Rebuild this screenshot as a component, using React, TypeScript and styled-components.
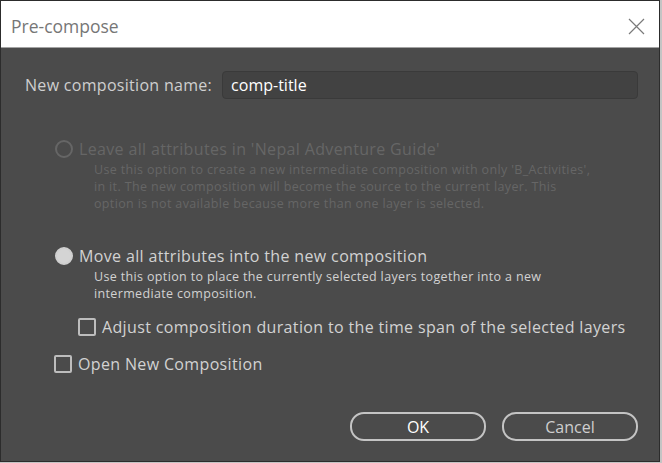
import React from "react";
import styled, { createGlobalStyle } from "styled-components";

const Global = createGlobalStyle`
  html, body { margin: 0; padding: 0; background: #c4c4c4; }
  body { font-family: "Open Sans", "Liberation Sans", sans-serif; }
  * { box-sizing: border-box; }
`;

const Window = styled.div`
  width: 660px;
  height: 462px;
  border: 1px solid #2c2c2c;
  display: flex;
  flex-direction: column;
  background: #4b4b4b;
`;

const TitleBar = styled.div`
  height: 47px;
  flex: none;
  background: #ffffff;
  border-bottom: 1px solid #a3a3a3;
  display: flex;
  align-items: center;
  justify-content: space-between;
  padding: 4px 14px 0 10px;
`;

const Title = styled.span`
  font-size: 17.5px;
  color: #767676;
`;

const CloseBtn = styled.div`
  width: 18px;
  height: 18px;
  display: flex;
  align-items: center;
  justify-content: center;
`;

const Body = styled.div`
  flex: 1;
  display: flex;
  flex-direction: column;
  padding: 23px 21px 0 24px;
`;

const NameRow = styled.div`
  display: flex;
  align-items: center;
  gap: 10px;
`;

const Label = styled.span`
  font-size: 16px;
  letter-spacing: 0.3px;
  color: #cfcfcf;
`;

const NameInput = styled.div`
  flex: 1;
  height: 28px;
  background: #424242;
  border: 1px solid #3a3a3a;
  border-radius: 4px;
  display: flex;
  align-items: center;
  padding-left: 8px;
  font-size: 16px;
  color: #ffffff;
`;

const Option = styled.div<{ $top: number; $indent: number }>`
  margin-top: ${(p) => p.$top}px;
  margin-left: ${(p) => p.$indent}px;
  display: flex;
  flex-direction: column;
`;

const OptionHead = styled.div<{ $disabled?: boolean }>`
  display: flex;
  align-items: center;
  gap: 6px;
  font-size: 16px;
  letter-spacing: 0.35px;
  line-height: 20px;
  color: ${(p) => (p.$disabled ? "#666666" : "#d2d2d2")};
`;

const Radio = styled.span<{ $checked?: boolean; $disabled?: boolean }>`
  width: 18px;
  height: 18px;
  border-radius: 50%;
  flex: none;
  border: 2px solid ${(p) => (p.$disabled ? "#666666" : "#cfcfcf")};
  background: ${(p) => (p.$checked ? "#d4d4d4" : "transparent")};
`;

const Box = styled.span`
  width: 18px;
  height: 18px;
  flex: none;
  border: 2px solid #bdbdbd;
  border-radius: 2px;
`;

const Desc = styled.div<{ $disabled?: boolean }>`
  margin-top: 2px;
  margin-left: 39px;
  font-size: 12.5px;
  letter-spacing: 0.35px;
  line-height: 17px;
  color: ${(p) => (p.$disabled ? "#666666" : "#d2d2d2")};
`;

const Buttons = styled.div`
  margin-top: 38px;
  display: flex;
  justify-content: flex-end;
  gap: 16px;
`;

const Button = styled.div<{ $primary?: boolean }>`
  width: 136px;
  height: 29px;
  border: 2px solid #c4c4c4;
  border-radius: 14px;
  display: flex;
  align-items: center;
  justify-content: center;
  font-size: 16px;
  color: ${(p) => (p.$primary ? "#ffffff" : "#cfcfcf")};
`;

export default function App() {
  return (
    <>
      <Global />
      <Window>
        <TitleBar>
          <Title>Pre-compose</Title>
          <CloseBtn>
            <svg width="17" height="17" viewBox="0 0 17 17">
              <path d="M1 1 L16 16 M16 1 L1 16" stroke="#7a7a7a" strokeWidth="1.2" fill="none" />
            </svg>
          </CloseBtn>
        </TitleBar>
        <Body>
          <NameRow>
            <Label>New composition name:</Label>
            <NameInput>comp-title</NameInput>
          </NameRow>

          <Option $top={40} $indent={30}>
            <OptionHead $disabled>
              <Radio $disabled />
              Leave all attributes in 'Nepal Adventure Guide'
            </OptionHead>
            <Desc $disabled>
              Use this option to create a new intermediate composition with only 'B_Activities',
              <br />
              in it. The new composition will become the source to the current layer. This
              <br />
              option is not available because more than one layer is selected.
            </Desc>
          </Option>

          <Option $top={34} $indent={30}>
            <OptionHead>
              <Radio $checked />
              Move all attributes into the new composition
            </OptionHead>
            <Desc>
              Use this option to place the currently selected layers together into a new
              <br />
              intermediate composition.
            </Desc>
          </Option>

          <Option $top={15} $indent={53}>
            <OptionHead>
              <Box />
              Adjust composition duration to the time span of the selected layers
            </OptionHead>
          </Option>

          <Option $top={17} $indent={29}>
            <OptionHead>
              <Box />
              Open New Composition
            </OptionHead>
          </Option>

          <Buttons>
            <Button $primary>OK</Button>
            <Button>Cancel</Button>
          </Buttons>
        </Body>
      </Window>
    </>
  );
}
